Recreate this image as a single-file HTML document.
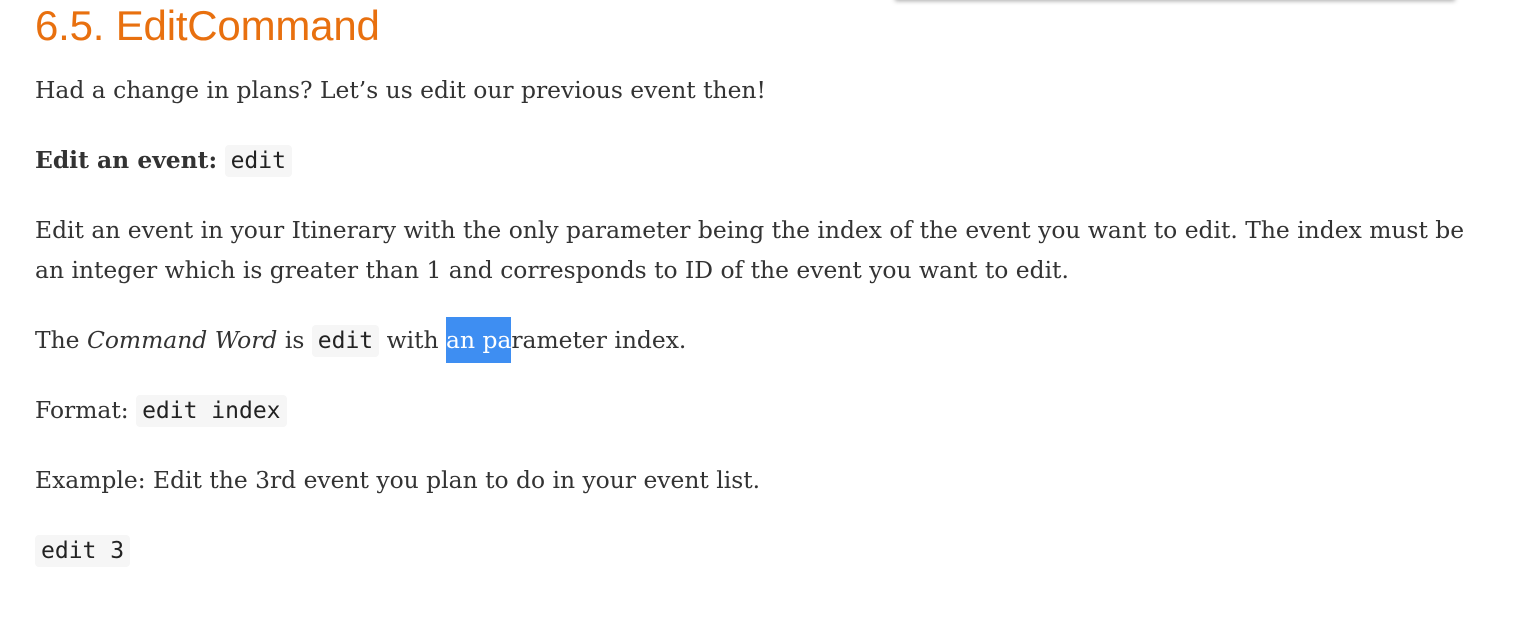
<!DOCTYPE html>
<html><head><meta charset="utf-8"><style>
html,body{margin:0;padding:0;background:#fff;width:1530px;height:620px;overflow:hidden}
body{position:relative;font-family:"DejaVu Serif","Liberation Serif",serif;font-size:23.4px;color:#333}
.shadow{position:absolute;left:895px;top:-6px;width:560px;height:6px;box-shadow:0 1px 5px rgba(0,0,0,.35);background:#fff}
h1{position:absolute;left:35px;top:0;margin:0;font-family:"Liberation Sans",sans-serif;font-weight:400;font-size:42px;line-height:52px;color:#e8700f;letter-spacing:-0.2px}
p{position:absolute;left:35px;margin:0;line-height:40px;white-space:nowrap}
code{font-family:"DejaVu Sans Mono","Liberation Mono",monospace;font-size:23px;background:#f6f6f6;border-radius:4px;padding:3px 6px;color:#222}
.sel{background:#3e8ef2;color:#fff;padding:9px 0}
</style></head><body>
<div class="shadow"></div>
<h1>6.5. EditCommand</h1>
<p style="top:70px">Had a change in plans? Let’s us edit our previous event then!</p>
<p style="top:140px"><b>Edit an event:</b> <code>edit</code></p>
<p style="top:210px">Edit an event in your Itinerary with the only parameter being the index of the event you want to edit. The index must be<br>an integer which is greater than 1 and corresponds to ID of the event you want to edit.</p>
<p style="top:320px">The <i>Command Word</i> is <code>edit</code> with <span class="sel">an pa</span>rameter index.</p>
<p style="top:390px">Format: <code>edit index</code></p>
<p style="top:460px">Example: Edit the 3rd event you plan to do in your event list.</p>
<p style="top:530px"><code>edit 3</code></p>
</body></html>
